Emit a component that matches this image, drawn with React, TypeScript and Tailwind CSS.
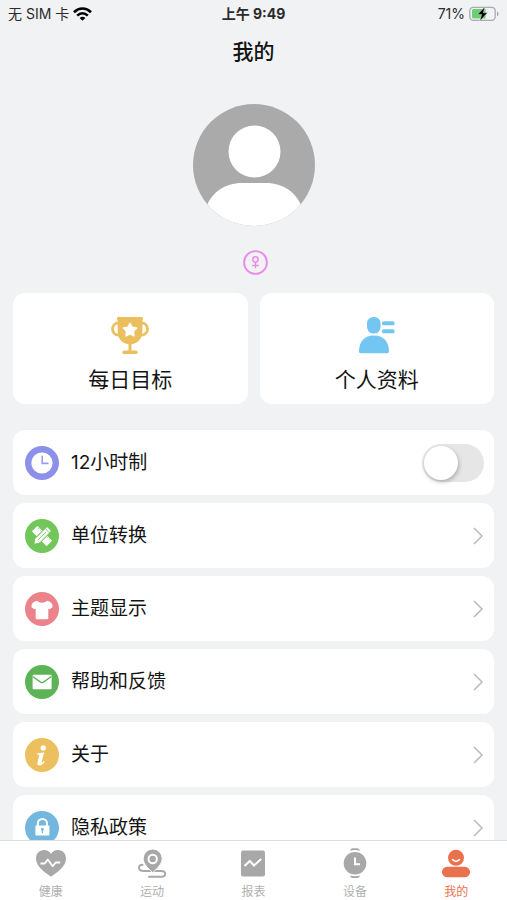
import { useState } from "react";
import type { ReactNode } from "react";
import clsx from "clsx";

const ClockIcon = () => (
  <svg viewBox="0 0 34 34" className="h-[34px] w-[34px] shrink-0">
    <circle cx="17" cy="17" r="17" fill="#8b90e8" />
    <circle cx="17" cy="17" r="10.6" fill="#fff" />
    <path d="M17.2 9.8v7.6h6.3" fill="none" stroke="#9a9ee8" strokeWidth="1.6" />
  </svg>
);

const UnitIcon = () => (
  <svg viewBox="0 0 34 34" className="h-[34px] w-[34px] shrink-0">
    <circle cx="17" cy="17" r="17" fill="#72c65a" />
    <g transform="rotate(45 17 17)">
      <rect x="6.500" y="13" width="21" height="8" rx="1" fill="#fff" />
      <path
        d="M9.500 13v1.800M12 13v1.400M22 13v1.400M24.500 13v1.800"
        stroke="#72c65a"
        strokeWidth=".7"
      />
    </g>
    <g transform="rotate(-45 17 17)">
      <path
        d="M5.500 17l4.500-3.300h16a1.500 1.500 0 0 1 1.500 1.500v3.600a1.500 1.500 0 0 1-1.500 1.500H10z"
        fill="#fff"
        stroke="#72c65a"
        strokeWidth="1"
      />
      <path
        d="M11 17h12M24.500 14v6"
        stroke="#72c65a"
        strokeWidth=".8"
      />
    </g>
  </svg>
);

const ThemeIcon = () => (
  <svg viewBox="0 0 34 34" className="h-[34px] w-[34px] shrink-0">
    <circle cx="17" cy="17" r="17" fill="#ec838b" />
    <path
      d="M12.200 8.800c1.400 2.600 8.200 2.600 9.600 0 2.400.4 4 1.200 5.200 3.200.6 1 .7 2.400.2 3.500l-2.600 1.800-1.300-.6V26c0 .8-.4 1.200-1.200 1.200H11.900c-.8 0-1.200-.4-1.200-1.200v-9.300l-1.300.6-2.600-1.800c-.5-1.100-.4-2.500.2-3.500 1.200-2 2.800-2.800 5.200-3.200z"
      fill="#fff"
    />
  </svg>
);

const MailIcon = () => (
  <svg viewBox="0 0 34 34" className="h-[34px] w-[34px] shrink-0">
    <circle cx="17" cy="17" r="17" fill="#5eb356" />
    <rect x="7.6" y="9.8" width="19" height="14.5" rx="1" fill="#fff" />
    <path
      d="M7.600 11.500l8 5.600c.9.600 1.900.600 2.800 0l8-5.600"
      fill="none"
      stroke="#5eb356"
      strokeWidth="1.3"
    />
  </svg>
);

const AboutIcon = () => (
  <svg viewBox="0 0 34 34" className="h-[34px] w-[34px] shrink-0">
    <circle cx="17" cy="17" r="17" fill="#ecc05e" />
    <circle cx="18.200" cy="9.900" r="2.600" fill="#fff" />
    <path
      d="M12 15.400c2.400-.2 4.600-.6 7.200-1.200l-2.500 9.700c-.2.900.4 1.100 2.200-1l.8.900c-1.600 2.200-3.200 3.700-5.200 3.700-1.900 0-2.400-1.300-2-3l1.700-6.700c.2-.9-.5-1.200-2.200-1.200z"
      fill="#fff"
    />
  </svg>
);

const LockIcon = () => (
  <svg viewBox="0 0 34 34" className="h-[34px] w-[34px] shrink-0">
    <circle cx="17" cy="17" r="17" fill="#73b7df" />
    <path
      d="M12.800 15.500v-3a4.600 4.600 0 0 1 9.200 0v3"
      fill="none"
      stroke="#fff"
      strokeWidth="2"
    />
    <rect x="10.400" y="14.500" width="14" height="10" rx="1" fill="#fff" />
    <circle cx="17.400" cy="18.300" r="1.400" fill="#73b7df" />
    <path d="M17.400 18.500v3.500" stroke="#73b7df" strokeWidth="1.200" />
  </svg>
);

const TrophyIcon = () => (
  <svg viewBox="0 0 38 37" className="h-[37px] w-[38px]">
    <g fill="none" stroke="#ebbf5e" strokeWidth="2.800">
      <ellipse cx="7.500" cy="12" rx="6" ry="6.200" />
      <ellipse cx="30.500" cy="12" rx="6" ry="6.200" />
    </g>
    <path
      d="M7 0h24a1 1 0 0 1 1 1c0 1.500-.6 2-.6 3.500V14c0 8-5 13.200-12.400 13.200S6.600 22 6.600 14V4.500C6.600 3 6 2.500 6 1a1 1 0 0 1 1-1z"
      fill="#ebbf5e"
    />
    <path d="M19 26v9" stroke="#ebbf5e" strokeWidth="3" />
    <path d="M13 35.200h12" stroke="#ebbf5e" strokeWidth="3.400" strokeLinecap="round" />
    <path
      d="M19 6.400l2 4 4.500.7-3.200 3.200.7 4.500-4-2.100-4 2.100.7-4.500-3.200-3.200 4.500-.7z"
      fill="#fff"
      stroke="#fff"
      strokeWidth="1.600"
      strokeLinejoin="round"
    />
  </svg>
);

const ProfileIcon = () => (
  <svg viewBox="0 0 36 37" className="h-[37px] w-[36px]" fill="#74c6f2">
    <rect x="8" y="0" width="13.600" height="16.500" rx="6.400" />
    <path d="M0 34.500C0 24.500 5.500 18.500 15 18.500s15 6 15 16c0 1-.6 1.700-1.700 1.700H1.700C.6 36.200 0 35.500 0 34.500z" />
    <rect x="23" y="4.300" width="12.500" height="4" rx="1.500" />
    <rect x="23" y="12.300" width="12.500" height="4" rx="1.500" />
  </svg>
);

const HeartIcon = () => (
  <svg viewBox="0 0 30 30" className="h-[30px] w-[30px]">
    <path
      d="M15 28.700C9 24.500 0 18.500 0 10.500 0 5.500 3.500 2 8 2c3 0 5.500 1.500 7 4 1.500-2.500 4-4 7-4 4.500 0 8 3.500 8 8.500 0 8-9 14-15 18.200z"
      fill="#a8a8a8"
    />
    <path
      d="M4.500 15.500h4.300l3-4 4.900 6.800 3-3.800h4.500"
      fill="none"
      stroke="#fff"
      strokeWidth="1.800"
      strokeLinejoin="round"
    />
  </svg>
);

const SportIcon = () => (
  <svg viewBox="0 0 30 30" className="h-[30px] w-[30px]">
    <path
      d="M5.500 16.700C3.200 16.700 2 18 2 19.700c0 2.300 2 3.200 5 3.200h17.200c2.500 0 4 .8 4 2.800s-1.500 3-4 3H12"
      fill="none"
      stroke="#a8a8a8"
      strokeWidth="2"
      strokeLinecap="round"
    />
    <path
      d="M15.700 1a9.500 9.500 0 0 1 9.500 9.500c0 5.500-5 10-9.500 14.200-4.500-4.200-9.500-8.700-9.500-14.200A9.500 9.500 0 0 1 15.700 1z"
      fill="#a8a8a8"
      stroke="#fff"
      strokeWidth="1"
    />
    <circle cx="15.700" cy="11" r="4.200" fill="none" stroke="#fff" strokeWidth="2" />
  </svg>
);

const ReportIcon = () => (
  <svg viewBox="0 0 30 30" className="h-[30px] w-[30px]">
    <rect x="3" y="2.500" width="24" height="26" rx="2" fill="#a8a8a8" />
    <path
      d="M6.500 18l5.300-5 4.200 4.500 7.200-6.500"
      fill="none"
      stroke="#fff"
      strokeWidth="2"
    />
  </svg>
);

const WatchIcon = () => (
  <svg viewBox="0 0 30 30" className="h-[30px] w-[30px]">
    <circle cx="15" cy="15.200" r="11.300" fill="#a8a8a8" />
    <path
      d="M10 2.800C10.500 1 11.300.200 12.700.200h4.600c1.400 0 2.200.8 2.700 2.600-3-1.200-7-1.200-10 0zM10 27.400c.5 1.700 1.300 2.500 2.700 2.500h4.600c1.400 0 2.200-.8 2.700-2.500-3 1.100-7 1.100-10 0z"
      fill="#a8a8a8"
    />
    <path d="M15 9.500v6.800h5" fill="none" stroke="#fff" strokeWidth="2" />
  </svg>
);

const MineIcon = () => (
  <svg viewBox="0 0 30 30" className="h-[30px] w-[30px]">
    <circle cx="15" cy="9.800" r="8" fill="#e9714d" />
    <path
      d="M11.500 11.500c1.800 2.300 5.200 2.300 7 0"
      fill="none"
      stroke="#fff"
      strokeWidth="1.500"
      strokeLinecap="round"
    />
    <rect x="1" y="18.800" width="28" height="10.400" rx="5.200" fill="#e9714d" />
  </svg>
);

const menuItems: { label: string; icon: ReactNode }[] = [
  { label: "单位转换", icon: <UnitIcon /> },
  { label: "主题显示", icon: <ThemeIcon /> },
  { label: "帮助和反馈", icon: <MailIcon /> },
  { label: "关于", icon: <AboutIcon /> },
  { label: "隐私政策", icon: <LockIcon /> },
];

const tabs: { label: string; icon: ReactNode; active?: boolean }[] = [
  { label: "健康", icon: <HeartIcon /> },
  { label: "运动", icon: <SportIcon /> },
  { label: "报表", icon: <ReportIcon /> },
  { label: "设备", icon: <WatchIcon /> },
  { label: "我的", icon: <MineIcon />, active: true },
];

function StatusBar() {
  return (
    <div className="grid h-7 grid-cols-3 items-center px-2 text-sm text-[#2b2b2d]">
      <div className="flex items-center gap-1">
        <span>无 SIM 卡</span>
        <svg viewBox="0 0 19 14" className="h-[14px] w-[19px]">
          <g fill="none" stroke="#000" strokeWidth="2.600">
            <path d="M1 5.200c5-4.900 12-4.900 17 0" />
            <path d="M4.200 8.600c3.200-3 7.400-3 10.600 0" />
          </g>
          <path d="M6.600 10.900c1.800-1.500 4-1.500 5.800 0L9.500 13.800z" />
        </svg>
      </div>
      <div className="text-center font-bold">上午 9:49</div>
      <div className="flex items-center justify-end gap-1">
        <span>71%</span>
        <svg viewBox="0 0 30 16" className="h-4 w-[30px]">
          <rect
            x=".8"
            y="1.300"
            width="25.400"
            height="13"
            rx="3.500"
            fill="none"
            stroke="#aaabad"
            strokeWidth="1.300"
          />
          <path d="M28 5.500c2 .8 2 4 0 4.800z" fill="#aaabad" />
          <path d="M4.500 3h12v9.600h-12A1.500 1.500 0 0 1 3 11.100V4.500A1.500 1.500 0 0 1 4.500 3z" fill="#6ad076" />
          <path
            d="M16 .8L8.500 8.600h4.200L10.800 15l7.700-8.200h-4.300z"
            fill="#000"
            stroke="#f1f2f4"
            strokeWidth=".4"
          />
        </svg>
      </div>
    </div>
  );
}

function Avatar() {
  return (
    <svg viewBox="0 0 122 122" className="h-[122px] w-[122px]">
      <clipPath id="avatar-clip">
        <circle cx="61" cy="61" r="61" />
      </clipPath>
      <g clipPath="url(#avatar-clip)">
        <rect width="122" height="122" fill="#aaaaaa" />
        <circle cx="61.500" cy="47.500" r="26" fill="#fff" />
        <path
          d="M12 106c6-18 20-27 37-27h24c17 0 31 9 37 27v16H12z"
          fill="#fff"
        />
      </g>
    </svg>
  );
}

function Chevron() {
  return (
    <svg viewBox="0 0 12 18" className="ml-auto h-[18px] w-3 shrink-0">
      <path d="M2 1l8 8-8 8" fill="none" stroke="#b9b9b9" strokeWidth="1.500" />
    </svg>
  );
}

export default function App() {
  const [is12Hour, setIs12Hour] = useState(false);

  return (
    <div className="flex h-screen flex-col bg-[#f1f2f4] font-['Inter','Noto_Sans_CJK_SC',sans-serif] text-[#141414]">
      <StatusBar />

      <main className="min-h-0 flex-1 overflow-hidden px-[13px]">
        <h1 className="text-center text-[21px] leading-12 font-medium">我的</h1>

        {/* Avatar and gender */}
        <div className="mt-7 flex flex-col items-center gap-6">
          <Avatar />
          <svg viewBox="0 0 25 25" className="ml-1 h-[25px] w-[25px]">
            <g fill="none" stroke="#e98aec">
              <circle cx="12.500" cy="12.500" r="11.400" strokeWidth="1.900" />
              <circle cx="12.500" cy="9.500" r="2.700" strokeWidth="1.400" />
              <path d="M12.500 12.200v6M9.200 15.500h6.600" strokeWidth="1.400" />
            </g>
          </svg>
        </div>

        {/* Shortcuts */}
        <div className="mt-[18px] grid grid-cols-2 gap-3 text-[21px]">
          <button className="flex h-[111px] flex-col items-center rounded-xl bg-white pt-6">
            <TrophyIcon />
            <span className="mt-2 leading-9">每日目标</span>
          </button>
          <button className="flex h-[111px] flex-col items-center rounded-xl bg-white pt-6">
            <ProfileIcon />
            <span className="mt-2 leading-9">个人资料</span>
          </button>
        </div>

        {/* Settings */}
        <div className="mt-[26px] flex flex-col gap-2 text-[19px] leading-[33px]">
          <label className="flex h-[65px] shrink-0 items-center gap-3 rounded-xl bg-white pr-[10px] pl-3">
            <ClockIcon />
            <span>12小时制</span>
            <input
              type="checkbox"
              role="switch"
              checked={is12Hour}
              onChange={(e) => setIs12Hour(e.target.checked)}
              className="ml-auto h-[38px] w-[62px] shrink-0 appearance-none rounded-full bg-[#e6e6e6] p-[2px] before:block before:h-[34px] before:w-[34px] before:rounded-full before:bg-white before:shadow-[1px_2px_4px_rgba(0,0,0,0.25)] before:transition-transform before:content-[''] checked:bg-[#6ad076] checked:before:translate-x-6"
            />
          </label>
          {menuItems.map((item) => (
            <button
              key={item.label}
              className="flex h-[65px] shrink-0 items-center gap-3 rounded-xl bg-white pr-[10px] pl-3"
            >
              {item.icon}
              <span>{item.label}</span>
              <Chevron />
            </button>
          ))}
        </div>
      </main>

      {/* Tab bar */}
      <nav className="grid h-[60px] shrink-0 grid-cols-5 border-t border-[#dedfe1] bg-white text-xs">
        {tabs.map((tab) => (
          <a
            key={tab.label}
            href="#"
            className={clsx(
              "flex flex-col items-center pt-[7px]",
              tab.active ? "text-[#e9714d]" : "text-[#b0b0b0]"
            )}
          >
            {tab.icon}
            <span className="mt-1 leading-5">{tab.label}</span>
          </a>
        ))}
      </nav>
    </div>
  );
}
